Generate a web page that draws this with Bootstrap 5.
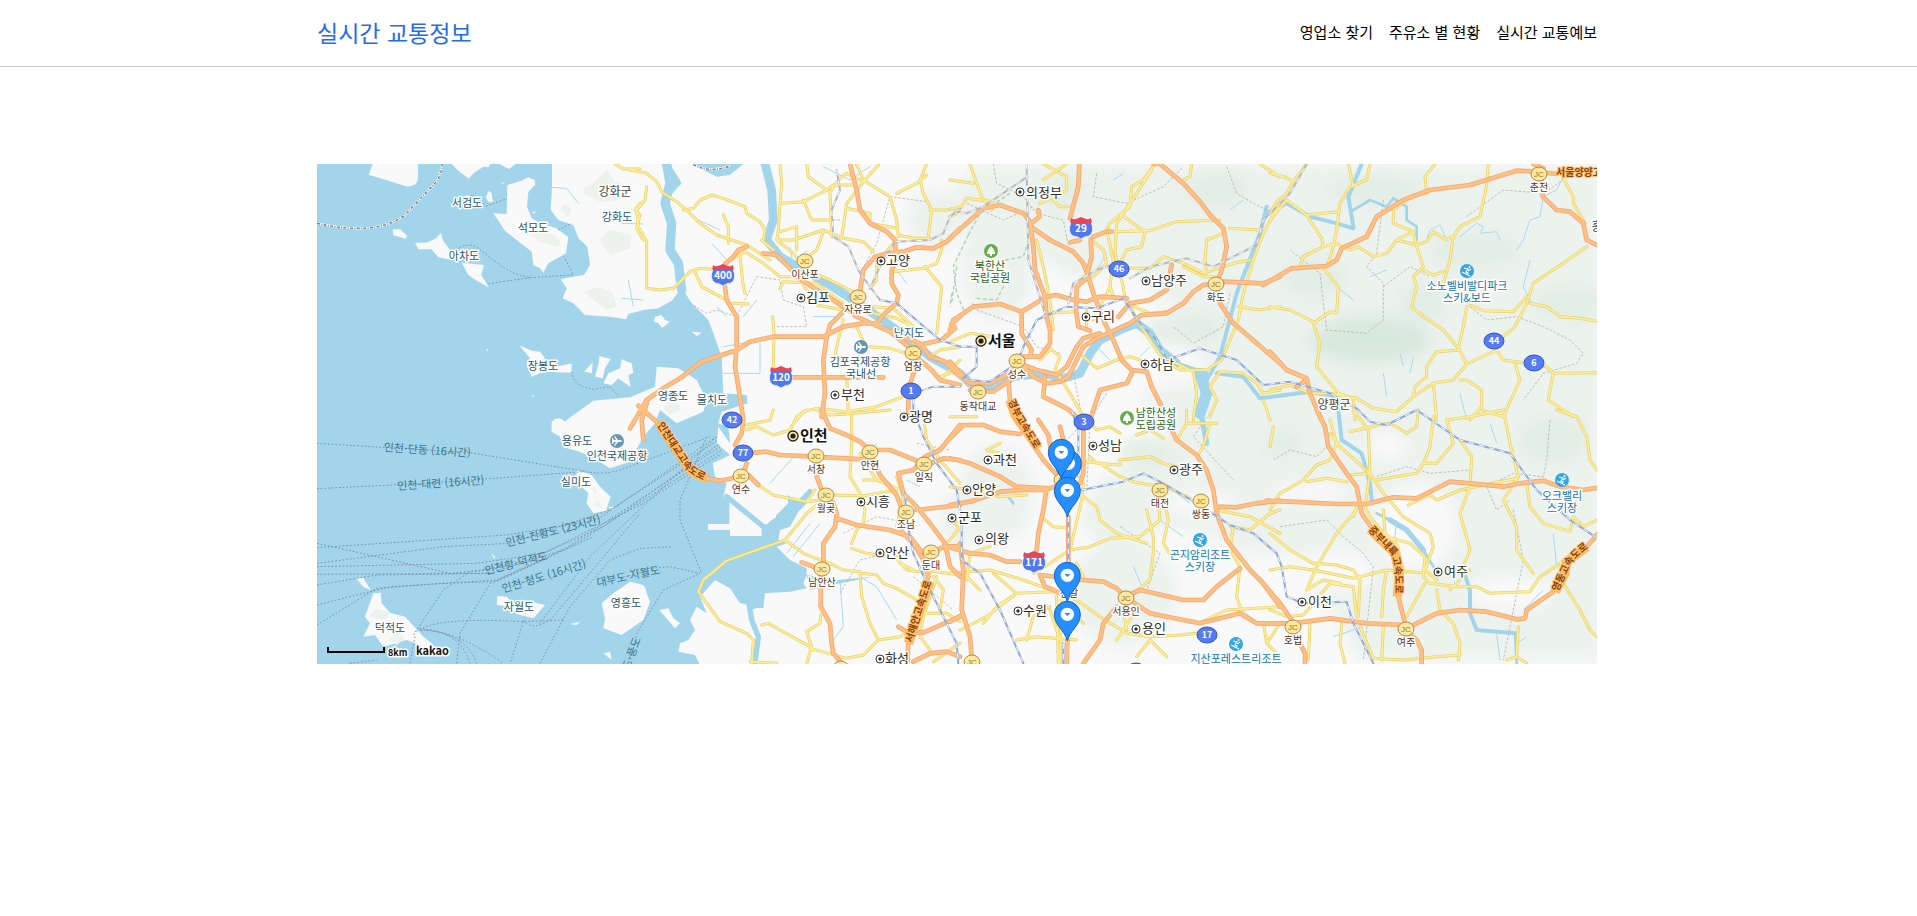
<!DOCTYPE html>
<html lang="ko">
<head>
<meta charset="utf-8">
<meta name="viewport" content="width=device-width, initial-scale=1">
<title>실시간 교통정보</title>
<link href="https://cdn.jsdelivr.net/npm/bootstrap@5.3.0/dist/css/bootstrap.min.css" rel="stylesheet">
<style>
body{font-family:"Noto Sans CJK KR","Noto Sans",sans-serif;color:#000;background:#fff}
.page-wrap{max-width:1283px;padding-right:3px}
.site-header{border-bottom:1px solid #c8c8c8}
.site-header .page-wrap{min-height:66px;padding-bottom:3px}
.brand-link{font-size:23px;line-height:34px;color:#1f6bf0}
.menu-link{font-size:15px;line-height:24px;color:#000}
.map-section{padding-top:97px}
.traffic-map{display:block;width:100%;height:auto;overflow:hidden}
.land{fill:#f9f9f9}
.green{fill:#ecf2ee}
.water{fill:none;stroke:#a2d5eb;stroke-linejoin:round;stroke-linecap:round}
.stream{fill:none;stroke:#a9daee;stroke-width:3}
.roads{fill:none;stroke-linejoin:round;stroke-linecap:round}
.minor-edge{stroke:#e6cf70;stroke-width:9}
.minor-fill{stroke:#feee93;stroke-width:5}
.major-edge{stroke:#f2a67a;stroke-width:14}
.major-fill{stroke:#ffc180;stroke-width:9}
.named-road{stroke:#ffb95e;stroke-width:28;stroke-linecap:butt}
.ferry{fill:none;stroke:#7d8fae;stroke-width:3;stroke-dasharray:5 6}
.border-line{fill:none;stroke:#b5b5a8;stroke-width:2.5;stroke-dasharray:8 5}
.rail-grey{stroke:#b9b9bd;stroke-width:6}
.rail-blue{stroke:#90a9d6;stroke-width:6}
.rail-dash{stroke:#fff;stroke-width:3;stroke-dasharray:16 16;stroke-linecap:butt}
.map-text text{paint-order:stroke;stroke:#fff;stroke-width:3px;stroke-linejoin:round}
.isle{font-size:11px;fill:#1f566f;text-anchor:middle}
.county{font-size:12px;fill:#444;text-anchor:middle}
.city{font-size:13px;fill:#2b2b2b}
.metro{font-size:15px;fill:#111;font-weight:700}
.junction{font-size:10px;fill:#5b3218;text-anchor:middle}
.park{font-size:11px;fill:#2c6212;text-anchor:middle}
.resort{font-size:11px;fill:#0f74b8;text-anchor:middle}
.map-text .route text{font-size:11px;fill:#41758c;stroke:none;text-anchor:middle}
.map-text .roadname text{font-size:10px;fill:#8d4300;stroke:#ffc173;stroke-width:2px;font-weight:700}
.map-text .shield text{font-size:10px;fill:#fff;stroke:none;font-weight:700;text-anchor:middle}
.map-text .shield .num{font-size:9px}
.jc-plate text,.map-text .jc-plate text{font-family:"Liberation Sans",sans-serif;font-size:8px;fill:#94762c;stroke:none;text-anchor:middle}
.scale-text{font-size:9px;font-weight:700;fill:#111}
.logo-text{font-size:11px;font-weight:700;fill:#111}
</style>
</head>
<body>
<header class="site-header">
  <div class="page-wrap container-fluid ps-0 d-flex flex-wrap align-items-center justify-content-between">
    <a class="brand-link text-decoration-none" href="#">실시간 교통정보</a>
    <nav class="d-flex flex-wrap gap-3" aria-label="주 메뉴">
      <a class="menu-link text-decoration-none" href="#">영업소 찾기</a>
      <a class="menu-link text-decoration-none" href="#">주유소 별 현황</a>
      <a class="menu-link text-decoration-none" href="#">실시간 교통예보</a>
    </nav>
  </div>
</header>
<main class="map-section">
<div class="page-wrap container-fluid ps-0">
<svg class="traffic-map" viewBox="317 164 1280 500" role="img" aria-label="수도권 지도">
<defs>
<filter id="soft" x="-20%" y="-20%" width="140%" height="140%"><feGaussianBlur stdDeviation="22"/></filter>
<g id="minor">
  <g transform="translate(0 0)"><path d="M915,12L940,27 990,27M990,130L975,150 990,165 980,205 1000,240"/></g>
  <g transform="translate(960 0)"><path d="M0,30L50,40 80,65 95,95 140,125 175,155 210,190 260,225 350,255 420,300M50,80L45,120 20,150 25,200 50,245 50,385 90,390 130,385 180,335 210,325 270,330M160,150L190,145 210,120 245,105 280,115 345,140 350,160 390,185 405,210 400,240M195,335L215,380 280,415M280,165L295,200 295,250M330,290L340,380 345,400M310,430L355,432M300,300L345,275 400,310 450,350 520,350M450,385L460,365 560,370M428,470L432,520 430,620M450,12L455,70 450,130 445,210 440,240 490,280 530,330 600,360 680,400M395,240L430,270M455,130L520,125 590,90 610,75 670,75M530,12L535,50 590,90M520,120L545,180 600,180M450,215L500,200 500,270M440,240L490,240 580,210 640,235 700,245 730,275M580,215L560,270 520,300M745,15L700,65 690,80 650,130 640,200 635,235M680,15L700,60 780,110 800,180 805,230M650,145L720,160 720,190 800,205M890,12L870,60 880,100 905,150 900,190 895,230M900,150L950,150 990,140M700,65L650,40 630,55 600,95 605,230M805,225L850,235 900,235M890,45L860,70 800,100M790,250L740,310 740,360 720,385M790,335L880,325 920,310 935,270 935,240M885,320L935,380 930,430 920,520M730,440L790,445 850,500M730,460L800,475 850,500 850,550M640,480L620,560 610,620M680,500L700,545M640,450L560,435 520,375M720,560L780,565 830,580M500,780L520,755 560,745 650,755 740,740 820,710M650,650L655,760M900,590L930,570 990,560M930,650L990,630M990,600L930,660M560,370L600,400 640,430"/></g>
  <g transform="translate(960 750)"><path d="M350,60L380,50 430,75 480,60 500,20 530,0M350,45L420,30 430,0M560,0L600,15 650,12 780,0M665,15L665,100 660,200 690,250 705,300 700,340 680,360 665,400M665,415L710,430 800,445M800,445L830,480 900,490M690,130L720,180 740,210 800,235M385,225L430,255 530,275M555,240L530,275 570,270M615,255L700,258 800,240M560,285L530,310 465,390 290,452 220,510 205,545 270,635 350,670 370,690 365,760M465,390L520,430 600,460 640,480 690,485M690,490L695,560 720,640 745,690 700,735 650,745 540,715M700,490L740,495 760,520 800,535 860,570M745,690L810,680 860,650M395,645L415,640 450,660 540,710M572,615L570,640 530,665 545,710 530,760M910,500L940,540 930,600M880,480L990,495M860,610L950,610 990,635M920,500L880,620 870,680 900,720M880,20L890,90 930,150 990,220M975,330L985,360 950,400 915,425M360,755L440,760M800,200L820,260 800,350M700,210L760,210 800,240M800,430L810,460 850,480M910,755L990,700"/></g>
  <g transform="translate(1920 0)"><path d="M60,12L80,70 95,110 125,150M0,60L70,70M0,170L20,160 50,115 130,125M280,12L350,50 350,90 270,130M305,115L330,140 355,140M350,12L280,60M615,12L580,60 545,80 540,140 480,190 470,210 490,300 480,380 490,410M605,30L560,100 500,190 495,280 515,360 525,410M515,165L585,215 575,260 530,270 510,310M490,215L600,212 680,185 810,180M840,205L930,210M725,12L720,50 690,65M930,12L990,50M420,235L460,270 470,310 430,350 400,350M540,325L600,325 640,290 700,310 760,340 850,310 900,300M820,220L770,240 765,300 770,345M700,320L760,350 800,350M990,130L940,220 910,300 880,400 865,480 815,600 770,630 690,630 640,600 560,480 530,420M865,440L930,450 990,440M280,470L300,460 370,455M260,240L280,320 300,420 310,510M0,545L60,520 130,530M300,565L330,590 315,630 360,700 400,770M270,600L300,570M400,590L440,625 500,600 540,590 570,600M640,590L730,635 740,700 730,780M990,690L940,700 920,670 880,640 810,635 780,680 800,720 780,770M530,430L600,460 650,455M410,450L410,500M430,480L480,380M940,720L960,780"/></g>
  <g transform="translate(1920 750)"><path d="M0,230L60,240 150,260 230,255M420,140L440,160 510,165 510,150 600,140 640,160 720,180M410,155L450,160 510,200 550,215 600,225 640,225 720,265M440,60L480,50 510,70M440,60L410,30M560,75L600,60 640,85M680,90L710,40 800,40M710,0L710,40M400,260L440,290 450,330 500,370 590,400M620,240L630,330 570,380 480,385 420,410 360,420 300,460 250,490M640,260L655,330 640,400 670,450M590,300L610,380 610,430 600,510 540,560M280,325L310,350 355,355M400,220L395,270 360,420M0,490L120,480 220,510 330,550 380,570 450,620 530,670 600,680M130,490L200,550 140,590 100,640M30,660L110,620 200,550M200,550L310,545M320,560L325,760M335,570L330,760M345,590L400,640M300,600L330,690M200,690L260,680 380,690M600,680L690,675 740,670M600,690L560,740M600,690L650,740M530,660L520,600M560,600L500,690M850,350L840,420 870,470 860,560 880,620M840,350L900,360 960,310 990,300M800,300L900,320 990,370M745,640L830,600 990,590M780,40L760,110 740,140M90,540L40,490M150,100L110,120 150,130M0,20L80,20M120,410L60,430 50,510M300,590L250,620 230,690M400,500L380,460M940,640L950,700 990,740M990,640L950,700"/></g>
  <g transform="translate(2880 0)"><path d="M0,40L40,50 70,65 110,12M70,65L50,100 20,125 0,160M0,180L50,120 110,165 160,160 205,155M235,12L250,80M300,12L290,60 240,80 210,130 200,210 190,260 175,310M110,165L155,235 160,260 100,290 90,320M160,260L200,250 240,270 265,260 310,290 350,280 380,240 430,215M495,12L465,50 470,100 430,105 370,150 370,190 430,215 440,260 460,320 430,350 440,380 425,440 460,470 520,510 565,565 590,612M380,240L440,255 470,245 490,215 530,240 550,230 570,200 630,170 650,75 655,12M550,230L540,300 520,370M460,330L490,345 520,335M880,55L910,110 910,130 945,190M950,260L880,310 790,370 770,430 735,500 700,530M780,430L830,440 870,470 930,475 990,485M600,435L640,452 730,455 770,410M590,440L580,500 565,565M570,570L500,575 470,620 470,650 435,680 430,710M590,612L680,570 700,600 740,605 830,620 850,640 990,638M590,612L550,660 490,670 430,710 380,755 310,745 260,715 180,700 120,700M160,325L205,380 200,460 180,455 130,490 150,550 140,620 205,700M0,440L60,450 130,485M570,660L590,660 635,690 635,740 600,780M635,750L700,770 750,660 735,610M490,670L500,780M850,640L835,720 910,770M0,690L60,675 120,700M205,700L250,715 255,780"/></g>
  <g transform="translate(2880 750)"><path d="M0,110L10,50M180,30L200,100 180,150 140,165 100,210 30,250 0,300M110,215L170,205 230,215M240,195L300,190M250,0L295,60 300,190 340,250 400,320 480,370 490,410 465,480 500,510M240,65L350,40 380,50 410,70 440,50 445,0M180,70L210,110 300,190 285,290 300,320 350,380 420,400 465,440 460,500M490,20L480,110 460,160 440,190 320,210M460,160L500,160 550,100 530,30 600,20 700,0M700,0L720,100 745,200 700,270 740,350 740,420 790,490M570,90L605,140 600,230 570,310 600,420 580,470M770,220L780,290 820,340 900,365 910,320 940,350 980,330M860,0L920,20 950,80 960,150 980,180M415,285L480,255 500,270 570,240 740,205M0,370L60,420 130,460 200,465 250,480 270,510 265,620M0,480L60,470 130,480 250,505 350,480 460,488M260,300L200,370 140,470 110,540M460,500L480,520 560,530 620,530 660,550 780,545 810,500 900,440M500,540L510,600 550,640 570,700 565,750M465,520L410,620M0,600L50,620 100,615 180,520 250,530 260,620M120,640L115,750M215,640L210,700 225,760M270,650L310,745 400,750 500,740 570,735M340,650L335,750M350,480L340,540 335,620M600,480L540,540M880,520L930,600 960,660 980,680M745,650L740,740 770,760M740,740L710,750M340,300L345,370 380,400 400,480M260,290L250,320M110,540L160,510 210,520"/></g>
</g>
<g id="major">
  <g transform="translate(960 0)"><path d="M660,12L680,90 690,150 720,190 770,215 795,240 797,275M825,275L797,300 785,330 785,370 805,405 800,430 765,460 740,490M285,312L310,290 325,270 350,260M400,280L440,285 480,325 500,350 570,395 640,440 680,470 735,495 780,515 835,560 870,600 905,630 930,660 990,675M990,205L950,245 910,265 860,262 820,275 775,280 735,290 700,330 692,380 690,440M0,805L50,720 100,685 150,655 215,605 320,570 360,545 430,530 580,530 640,500 700,490 740,490M285,380L290,420 320,470 320,560 315,620 325,680 340,780 335,820 315,855M485,652L760,652M640,455L600,495 590,530 580,600 585,700 575,770M865,555L935,540 975,505 965,490 990,470M735,495L870,550 900,590 945,605 990,650M870,610L850,640 835,690 835,770M25,737L80,785"/></g>
  <g transform="translate(960 750)"><path d="M40,90L35,30 50,-20M90,45L160,150 190,190 225,205 270,212 330,200M375,128L410,125 450,135 550,140 700,148 720,130M575,0L600,55 650,75 690,95 720,120 780,120 830,140 880,160M720,130L750,195 800,255 820,310M990,45L930,120 885,140 850,180 805,190 820,250 860,290 900,340 945,400 960,470 990,500M990,150L940,145 890,165M340,190L350,160M355,195L385,225M562,150L560,200 575,240 610,280 620,310 615,350 580,400 580,470M515,457L550,470 575,480M573,500L572,590 600,640 605,700 610,730 635,760M620,325L680,345 780,360 840,380 870,420 900,440M860,300L990,285M815,365L850,400 880,450 895,500 835,700 832,760M905,430L940,410 990,408M805,650L830,665 880,668 990,620M850,755L900,730 950,725 990,740"/></g>
  <g transform="translate(1920 0)"><path d="M388,12L385,80 360,175M0,235L50,190 100,145 150,135 220,160 240,185 250,260 255,330 285,410 290,470 300,510 300,550 270,590 220,590M265,150L268,170 245,190M250,205L300,240 370,275 400,310 415,350 380,380 378,450 385,500 420,512M362,247L390,240M430,230L470,215 485,215M422,240L425,290 412,340 430,400 460,480 490,540 515,600 545,630 590,635 605,680 635,740M610,12L630,12 700,70 750,125 780,165 820,205 830,260 815,330 800,370 760,375 730,395 700,430 650,460 575,465 540,490 440,535 400,560 380,600 355,650 330,665 290,670 250,650 210,610M0,510L10,480 40,460 70,440 150,432 215,455 290,410 320,405 370,420 410,425 450,410 530,415M505,470L540,430 600,420 650,390 665,315M215,455L215,520 245,570 240,590M800,375L810,430 850,490 920,550 990,610M820,365L940,370 990,350M0,605L40,650 60,670 120,670 180,640 210,610 260,630 320,645 350,620 380,560 400,535 450,520M60,690L130,695 180,660M175,660L180,720 200,760M285,650L280,710 350,745 390,780M545,640L530,670 450,690 420,780"/></g>
  <g transform="translate(1920 750)"><path d="M0,85L40,45 100,45 150,65 210,72M0,145L60,160 150,200 200,230 300,235 340,220M0,285L60,275 150,245 220,240 290,240M265,30L295,75 305,130M330,50L340,90M190,0L240,90 280,150 330,205M400,60L400,190 390,220M290,235L280,300 265,370 260,420M0,412L60,430 120,435 170,455 210,455M270,495L400,510 460,515 500,535 525,560 600,610 700,630 750,640 870,610 920,640 990,640M270,495L285,530 310,540 350,560M525,560L570,540 700,570 760,570 800,530 870,475M665,60L680,90 740,135 770,180 790,240 800,310 830,390 900,480 940,520 990,590M800,290L860,292 920,280 990,272M500,590L460,640 450,690 400,760M355,320L355,470M352,690L350,760M30,400L40,480 35,600 60,680 65,740M0,635L35,615"/></g>
  <g transform="translate(2880 0)"><path d="M-20,375L65,325 170,318 200,300 215,265 290,230 320,170 400,120 480,90 600,75 740,32 800,35 860,42M790,12L820,25M815,60L818,110 860,150 900,155 940,190 950,240 990,260M0,575L50,630 110,655 120,700 155,780M80,680L110,660"/></g>
  <g transform="translate(2880 750)"><path d="M140,0L165,50 175,110 230,190 260,230 275,310 310,360 375,430 390,490 385,560 405,640M-10,272L60,275 200,282 290,282 370,262 440,265 490,240 540,215 600,220 700,230 750,220 820,212 870,230 940,240 990,232M410,655L500,610 570,600 650,605 740,628 765,625 770,600 850,545 885,490 890,455 950,410 985,370M-30,510L30,580 65,630M0,640L70,640 180,625 290,640 400,645M410,665L440,690 455,720 455,760M80,680L105,730 105,760"/></g>
</g>
<g id="railgrey">
  <path d="M1580,30L1590,90 1565,150 1570,230 1615,260 1650,340 1710,420M1680,385L1710,320 1755,245 1860,240 1900,220 1920,170 1950,145M2150,12L2155,300 2205,460M1920,150L1970,160 2020,140 2145,55M2275,430L2290,370 2360,330 2420,310M2460,355L2520,320 2630,295 2710,320 2770,290 2840,255 2860,180 2910,130 2940,100 2990,12"/>
</g>
<g id="railblue">
  <path d="M1710,420L1760,430 1830,490 1890,540 1950,560 2000,560 2000,620 1960,655M1980,660L2040,665 2120,610 2145,550 2180,480 2270,440 2360,445 2440,415 2490,490 2540,540 2570,600 2670,565 2780,600 2860,675 2940,665 3060,700 3140,745 3180,785 3230,795 3320,750 3450,840 3600,880 3680,990 3780,1080 3870,1140M1810,750L1840,830 1880,910 1940,990 1955,1080 1955,1200 2010,1240 2070,1350 2140,1510M1785,1000L1790,1080 1810,1180 1860,1290 1940,1450 1945,1510M1950,680L1870,680 1810,700 1810,760M2285,750L2305,810 2305,950M2315,990L2440,965 2500,940 2560,970 2660,1030 2760,1095 2830,1120 2900,1180 2915,1220 2930,1310 2980,1330 3110,1325 3130,1390 3190,1510M2275,1070L2275,1210M2260,1450L2260,1510"/>
</g>
<g id="jc" class="jc-plate"><ellipse rx="8" ry="7" fill="#ffe79c" stroke="#ad8b4d"/><text y="3">JC</text></g>
<g id="dot"><circle r="4" fill="#fff" stroke="#333"/><circle r="1.7" fill="#333"/></g>
<g id="bigdot"><circle r="5" fill="#ffeaa0" stroke="#222" stroke-width="1.3"/><circle r="2.6" fill="#222"/></g>
<ellipse id="oval" rx="10" ry="8" fill="#567bf5" stroke="#3157b5"/>
<g id="express"><path d="M-10,-10Q-8,-8 -5,-9L0,-11L5,-9Q8,-8 10,-10L11,-5H-11Z" fill="#e64658"/><path d="M-10,-6H10Q14,4 8,8Q4,8 0,11Q-4,8 -8,8Q-14,4 -10,-6Z" fill="#5078f0" stroke="#fff" stroke-width=".7"/><path d="M-10,-8H10V-5H-10Z" fill="#e64658"/></g>
<g id="tree"><circle r="7" fill="#67ad49"/><path d="M0,-5Q4,-1 4,3H1V5H-1V3H-4Q-4,-1 0,-5Z" fill="#fff"/></g>
<g id="plane"><circle r="7" fill="#6497b0"/><path d="M5,0Q5,1 3,1H1L-2,5H-3L-1,1H-3L-4,3H-5V-3H-4L-3,-1H-1L-3,-5H-2L1,-1H3Q5,-1 5,0Z" fill="#fff"/></g>
<g id="ski"><circle r="7" fill="#35a5e6"/><circle cx="2.5" cy="-4" r="1" fill="#fff"/><path d="M-3,-3L1,-2 -1,1 1,2 0,4M4,-2L1,0M-5,1L3,5" fill="none" stroke="#fff" stroke-width="1.2"/></g>
<g id="pin"><path d="M0,80C-7,48 -39,34 -39,0A39,39 0 1 1 39,0C39,34 7,48 0,80Z" fill="#258fff" stroke="#1261c4" stroke-width="3"/><circle r="20" fill="#fff"/><path d="M-7,-4H7Q9,-4 7,-2L0,5L-7,-2Q-9,-4 -7,-4Z" fill="#258fff"/></g>
<path id="p-incheon" d="M657,425L682,463Q688,475 708,482"/>
<path id="p-gyeongbu" d="M1008,401L1014,415 1036,451"/>
<path id="p-west" d="M912,643L933,577"/>
<path id="p-inland" d="M1368,530L1391,554Q1397,570 1395,602"/>
<path id="p-east" d="M1558,592L1569,568Q1571,560 1592,545"/>
</defs>

<rect x="317" y="164" width="1280" height="500" fill="#a2d5eb"/>
<g transform="translate(310 160) scale(.333333)">
  <!-- islands and coast -->
  <g class="land">
    <path d="M188,12L176,44 288,79Q322,82 324,55V12ZM425,12L445,32 477,56 490,40 520,20 535,22 540,12ZM568,12L597,27 617,12Z"/>
    <path d="M592,75L635,62 655,52 674,60 675,75 655,95 651,140 665,175 690,190 740,205 775,232 768,280 715,310 700,338 690,325 670,315 665,275 620,240 585,212 550,160 590,162Z"/>
    <path d="M536,92L545,100 549,125 535,125 527,112ZM470,105L500,118 520,135 490,142 462,125ZM573,70L585,65 578,72ZM665,155L678,155 672,161ZM248,208L270,208 290,226 288,236 250,226ZM315,248L350,248 378,235 393,218 398,240 420,270 425,300 385,292 365,268 325,268ZM455,308L522,315 514,345 536,382 500,362 475,345Z"/>
    <path d="M726,12V80L722,150 745,180 790,195 805,235 832,260 840,315 822,345 790,350 752,358 770,385 758,415 790,430 825,465 900,470 948,478 955,462 1000,450 1045,445 1085,422 1110,390 1105,330 1070,280 1080,200 1060,120 1085,70 1060,30 1060,12Z"/>
    <path d="M628,556L665,572 690,575 705,595 693,605 692,618 740,620 785,610 785,638 700,635 665,650 650,610 660,595ZM822,635L848,607 846,640ZM868,588L902,597 885,625 878,655 855,650 865,615ZM880,670L895,640 930,625 935,598 965,610 970,638 955,645 962,682 925,655 905,675ZM530,565L536,572 530,574ZM551,585L558,593ZM615,705L624,703ZM662,708L678,704 668,710Z"/>
    <path d="M770,780L850,722 960,712 1035,680 1040,620 1105,625 1160,660 1190,720 1180,755 1100,790 1050,750 1035,790 1000,830 960,905 900,925 840,888 800,872 760,862 750,830 725,815 725,785Q745,765 765,785Z"/>
    <path d="M800,930L845,945 870,980 902,1010 888,1052 850,1060 830,1030 835,1000 800,965ZM892,1040L911,1040 910,1050ZM541,1147L531,1170ZM545,1178L557,1195 550,1195ZM138,1255L160,1254 182,1290 160,1280ZM190,1300L212,1298 215,1330 240,1358 285,1370 325,1413 340,1430 365,1450 363,1475 315,1450 290,1440 220,1460 195,1425 160,1430 180,1390 165,1370ZM562,1308L590,1310 610,1330 665,1325 705,1335 670,1375 620,1362 600,1340 560,1335ZM780,1392L810,1385 800,1395Z"/>
    <path d="M875,1330L910,1300 960,1265 1000,1275 1020,1325 1000,1380 935,1425 880,1405 885,1375ZM725,1462L740,1470ZM880,1480L900,1475 905,1500Z"/>
    <path d="M1080,12L1115,70 1060,130 1075,190 1070,275 1100,320 1120,390 1145,430 1195,480 1210,520 1235,590 1240,700 1310,705 1312,730 1235,755 1225,790 1255,800 1260,850 1225,800 1220,850 1260,885 1208,910 1215,950 1250,970 1240,1010 1360,1095 1400,1105 1440,1080 1410,1110 1405,1140 1430,1150 1400,1160 1440,1200 1490,1225 1490,1245 1480,1270 1490,1285 1440,1295 1360,1300 1355,1340 1320,1350 1275,1400 1320,1430 1325,1515H3870V0H1080Z"/>
    <path d="M1258,1025H1355V1128H1260V1110H1194V1092H1258ZM1215,1260L1260,1285 1290,1330 1320,1335 1332,1380 1345,1460 1340,1515H1170L1155,1485 1105,1475 1110,1450 1135,1440 1155,1410 1140,1380 1160,1340 1190,1360 1170,1310ZM1048,1350L1075,1345 1090,1375 1110,1390 1095,1405ZM960,1280L1005,1280 1015,1320 990,1365 960,1360Z"/>
    <path d="M1035,470L1055,465 1065,480 1080,485 1065,498 1055,503 1045,490 1032,485ZM1145,515L1175,518 1160,528Z"/>
  </g>
  <g fill="#a2d5eb"><path d="M1155,12H1300L1260,45 1220,50 1190,35ZM1370,980L1490,1030 1440,1080 1400,1120 1300,1060 1265,1030 1360,1095 1450,1040 1510,985 1490,1010 1440,1100 1410,1110ZM1300,1290L1370,1250 1360,1345 1320,1340ZM1490,1245L1580,1260 1690,1250 1590,1270 1500,1290Z"/></g>
  <path class="land" d="M1240,960L1330,960 1430,1000 1435,1030 1375,1090 1365,1095Z"/>
  <path class="water" stroke-width="28" d="M1070,12L1080,70 1065,130 1085,190 1080,270 1105,310 1115,390"/>
  <path class="water" stroke-width="16" d="M1250,1010L1360,1100M1400,1100L1500,995M1310,1290L1325,1380 1345,1430 1335,1510"/>
  <!-- hills -->
  <g class="green" filter="url(#soft)">
    <path d="M2000,12H3870V1500H3150L3050,1330 2950,1180 2820,1190 2680,1120 2560,1100 2400,1180 2300,1080 2380,950 2600,860 2480,700 2700,660 2600,450 2450,340 2300,360 2150,280 2000,350 1960,180 1880,140Z"/>
    <ellipse cx="2060" cy="330" rx="110" ry="150"/><ellipse cx="1870" cy="180" rx="80" ry="90"/><ellipse cx="2060" cy="1000" rx="110" ry="150"/><ellipse cx="2440" cy="1300" rx="160" ry="160"/><ellipse cx="1940" cy="1090" rx="50" ry="90"/>
  </g>
  <g fill="#dfece3" filter="url(#soft)" opacity=".8">
    <ellipse cx="3180" cy="540" rx="180" ry="70" fill="#d3e6d9"/><ellipse cx="2250" cy="100" rx="80" ry="45"/><ellipse cx="2720" cy="90" rx="100" ry="50"/><ellipse cx="3200" cy="90" rx="150" ry="40"/><ellipse cx="3500" cy="270" rx="140" ry="50"/><ellipse cx="2620" cy="510" rx="120" ry="50"/><ellipse cx="3010" cy="350" rx="90" ry="60"/><ellipse cx="3780" cy="430" rx="110" ry="50"/><ellipse cx="2510" cy="880" rx="90" ry="50"/><ellipse cx="3340" cy="430" rx="70" ry="60"/><ellipse cx="3730" cy="840" rx="100" ry="70"/><ellipse cx="2920" cy="850" rx="60" ry="40"/>
  </g>
  <g fill="#f9f9f9" filter="url(#soft)">
    <ellipse cx="3320" cy="1100" rx="120" ry="130"/><ellipse cx="3080" cy="1230" rx="120" ry="60"/><ellipse cx="3230" cy="860" rx="60" ry="45"/><ellipse cx="3600" cy="1300" rx="130" ry="50"/><ellipse cx="3000" cy="1000" rx="120" ry="30"/><ellipse cx="2670" cy="1030" rx="110" ry="35"/><ellipse cx="2440" cy="420" rx="80" ry="80"/>
  </g>
  <g fill="#edf2ec"><path d="M820,85L860,60 890,28 915,65 935,65 920,120 870,125 820,100ZM750,150L765,130 785,150 775,170ZM865,240L900,210 965,225 960,265 900,285ZM820,395L870,380 910,400 920,440 890,450 850,420ZM660,220L720,220 750,240 745,262 690,245ZM175,1370L200,1345 240,1360 225,1380ZM235,1440L260,1420 285,1435 260,1455ZM1060,745L1090,715 1115,745 1080,765ZM840,985L855,980 860,1000ZM850,1035L865,1020 875,1045Z"/></g>
  <!-- rivers and streams -->
  <path class="water" stroke-width="26" d="M1365,12L1385,90 1390,180 1370,240 1410,290 1480,330 1560,375 1660,440 1760,510 1860,590 1950,640 1980,670 2050,685 2110,650 2200,640 2260,655 2310,640 2340,580 2370,540 2440,505 2480,490 2520,520 2550,570 2600,610"/>
  <path class="water" stroke-width="12" d="M2600,610L2690,640M2870,140L2850,220 2780,400 2730,590 2690,660M2870,160L2930,130 3000,170 3080,190 3130,205M3155,12L3115,110 3130,200M3085,750L3095,840 3155,880 3180,970 3185,1020M3460,1230L3480,1290 3480,1360 3500,1410 3615,1420M2720,640L2800,650 2850,715 3000,695 3080,710 3085,750"/>
  <path class="water" stroke-width="34" d="M2670,640L2690,700 2670,760"/>
  <path class="water" stroke-width="16" d="M2680,700L2675,770 2690,850M3240,1080L3290,1110 3340,1170"/>
  <path class="water" stroke-width="8" d="M3130,150L3180,120 3230,140 3250,115 3290,140 3290,180 3320,200V240M3200,1060L3240,1080M3340,1170L3370,1220M3615,1420L3620,1510M2095,1010L2110,1030"/>
  <path class="stream" d="M3350,240L3360,210 3390,195 3410,240M3450,230L3500,190 3520,200 3510,220 3560,215 3570,240M3760,50L3740,90 3700,110 3690,170 3660,180 3640,240 3620,270M3660,300L3640,380 3670,440M720,82L770,85 805,130M935,190L1000,192M955,360L970,440M935,415L1000,420M1165,180L1230,210M1205,250L1250,300M1250,470L1220,440M1340,420L1300,470M1240,560L1350,540 1350,640 1240,640M1490,270L1450,320 1440,260M1580,470L1510,470M1540,20L1620,60 1680,20M1380,970L1460,880M1450,1190L1530,1090M1430,1180L1500,1090M1590,1260L1600,1400 1570,1440M1650,1250L1700,1280 1760,1380M1740,300L1790,370M1790,960L1830,980M1700,850L1660,910M2360,330L2390,280M2440,40L2410,60M2800,120L2760,150M2490,590L2520,560M2360,560L2400,600M2600,1000L2640,1030M2620,1130L2550,1080M2470,1220L2500,1290M2700,1180L2680,1240M2800,1350L2840,1390M3220,640L3230,710M3270,580L3280,620M3310,590L3300,640M3260,1080L3250,1180M3450,700L3470,780M3540,790L3560,850M3730,1120L3740,1220M3640,1350L3700,1290M3620,1450L3650,1430M3230,330L3180,350M3080,380L3130,420M3160,1400L3070,1430M3560,1420L3570,1500"/>
  <g class="ferry">
    <path d="M483,105L530,138 585,118M440,270Q470,245 500,262L570,315Q610,345 660,353L790,345 762,290M536,371L660,353M745,210L785,190M785,635Q790,680 850,688L900,680 925,707"/>
    <path d="M21,850L480,878 830,935Q880,945 930,930L1200,830M21,986L350,970 820,935M21,1163L590,1125 860,1080 1220,830M21,1210L400,1160 600,1150 900,1050 1225,840M21,1220L500,1210 700,1180 880,1100 1230,850M21,1243L540,1240 760,1170 1230,860M21,1275L200,1245 540,1240M21,1150L200,1190 420,1240 540,1230M21,1335L240,1280 560,1260 800,1150 1235,870M21,1395L200,1285 400,1270 560,1265 850,1130M310,1425L400,1290 480,1235 640,1210 1000,1030 1235,880M320,1415Q370,1370 640,1385L760,1380M640,1385Q620,1450 600,1510M640,1380Q670,1420 730,1370L990,1060M440,1510L450,1420 540,1270 700,1200M500,1510Q470,1420 330,1405M300,1510L315,1430M690,1510L780,1340 900,1200 990,1165 1090,1160M1190,830L1110,1020 1110,1080 1175,1240M960,1230L1080,1220 1170,1240 1060,1290 980,1420 960,1510M480,1510Q450,1410 330,1410M330,1410Q440,1410 580,1510M120,1510L200,1500M1220,830L840,1190 690,1390"/>
  </g>
  <path d="M21,190Q200,230 285,165L370,75Q395,50 396,12M1150,14Q1200,40 1260,18" fill="none" stroke="#fff" stroke-width="6"/>
  <path d="M21,190Q200,230 285,165L370,75Q395,50 396,12M1150,14Q1200,40 1260,18" fill="none" stroke="#777" stroke-width="4" stroke-dasharray="9 4 3 4"/>
  <g class="border-line"><path d="M1140,430L1190,460 1220,450 1280,470 1340,350 1410,360 1420,420 1480,440 1490,500 1400,500M1590,180L1500,180M1650,340L1700,250 1740,110 1850,125M1970,130L2080,180 2170,140M2050,12L2060,70 2140,110 2180,160 2260,180 2280,280M2360,40L2350,110 2450,130 2560,80 2620,20M2750,20L2780,100 2830,130 2870,150M2760,400L2740,500 2650,550 2590,500M2000,450L2140,500 2180,560 2250,580M2290,640L2320,790 2260,850M2390,700L2340,780 2330,1000M2700,760L2650,830 2770,960M2430,1100L2550,1180 2510,1290M3220,120L3200,280 3170,320 3220,370 3220,480 3170,520 3050,510 3040,430 3030,340 2940,270M3220,380L3300,320 3360,350M3470,170L3580,90 3700,100 3760,60M3480,440L3530,480 3620,470 3700,500 3780,540 3820,580 3800,610 3700,640 3640,720M3720,780L3710,900 3700,950 3610,940 3530,980 3560,1050 3600,1020M3200,950L3290,920 3360,940 3480,930M2890,900L2940,870 3020,890 3050,860M2910,1100L3050,1080 3100,1130 3160,1180 3190,1220 3160,1500M3610,1050L3640,1200 3580,1500M1600,1120L1700,1070 1800,1090M1590,1300L1650,1200 1730,1180M1820,850L1920,870M1810,1250L1930,1350"/></g>
  <g fill="none" stroke="#a8d4b1" stroke-width="4" stroke-dasharray="12 7"><path d="M1975,225L1930,320 1940,400 1965,460 1990,430M2000,415L2060,420 2085,370M1975,225L2010,160 2100,100M2085,300L2140,290 2150,260M1925,400L1920,440M1940,320L1925,430"/></g>
  <!-- roads and railways -->
  <g class="roads">
    <use href="#minor" class="minor-edge"/><use href="#minor" class="minor-fill"/>
    <use href="#major" class="major-edge"/><use href="#major" class="major-fill"/>
    <path class="named-road" d="M1045,788L1120,900 1145,935 1190,957M2100,720L2115,765 2185,865M1860,1265L1795,1450M3180,1108L3255,1180 3268,1245 3262,1310M3735,1295L3765,1240 3770,1205 3830,1160"/>
    <use href="#railgrey" class="rail-grey"/><use href="#railgrey" class="rail-dash"/>
    <use href="#railblue" class="rail-blue"/><use href="#railblue" class="rail-dash"/>
  </g>
</g>

<g class="map-text">
  <g class="isle">
    <text x="467" y="207">서검도</text><text x="533" y="232">석모도</text><text x="464" y="260">아차도</text><text x="617" y="221">강화도</text><text x="543" y="370">장봉도</text><text x="673" y="400">영종도</text><text x="712" y="404">물치도</text><text x="577" y="445">용유도</text><text x="576" y="486">실미도</text><text x="617" y="460">인천국제공항</text><text x="519" y="611">자월도</text><text x="626" y="607">영흥도</text><text x="390" y="632">덕적도</text><text x="909" y="337">난지도</text><text x="860" y="366">김포국제공항</text><text x="861" y="378">국내선</text>
  </g>
  <g class="county"><text x="615" y="196">강화군</text><text x="1334" y="409">양평군</text><text x="1597" y="231">홍</text></g>
  <g class="city">
    <text x="1026" y="197">의정부</text><text x="886" y="265">고양</text><text x="806" y="302">김포</text><text x="841" y="399">부천</text><text x="909" y="421">광명</text><text x="1151" y="285">남양주</text><text x="1091" y="321">구리</text><text x="1150" y="369">하남</text><text x="1098" y="450">성남</text><text x="993" y="464">과천</text><text x="972" y="494">안양</text><text x="866" y="506">시흥</text><text x="958" y="522">군포</text><text x="985" y="543">의왕</text><text x="885" y="557">안산</text><text x="1023" y="615">수원</text><text x="1142" y="633">용인</text><text x="1179" y="474">광주</text><text x="1444" y="576">여주</text><text x="1308" y="606">이천</text><text x="885" y="663">화성</text>
  </g>
  <use href="#dot" x="1020" y="192"/><use href="#dot" x="881" y="261"/><use href="#dot" x="801" y="298"/><use href="#dot" x="835" y="395"/><use href="#dot" x="904" y="417"/><use href="#dot" x="1146" y="281"/><use href="#dot" x="1086" y="317"/><use href="#dot" x="1145" y="364"/><use href="#dot" x="1093" y="446"/><use href="#dot" x="988" y="460"/><use href="#dot" x="967" y="490"/><use href="#dot" x="861" y="502"/><use href="#dot" x="952" y="518"/><use href="#dot" x="979" y="540"/><use href="#dot" x="880" y="553"/><use href="#dot" x="1018" y="611"/><use href="#dot" x="1136" y="629"/><use href="#dot" x="1174" y="470"/><use href="#dot" x="1438" y="572"/><use href="#dot" x="1302" y="602"/><use href="#dot" x="880" y="659"/>
  <g class="metro"><text x="988" y="346">서울</text><text x="800" y="441">인천</text></g>
  <use href="#bigdot" x="981" y="341"/><use href="#bigdot" x="793" y="436"/>

  <g class="junction">
    <text x="805" y="278">이산포</text><text x="858" y="313">자유로</text><text x="913" y="370">염창</text><text x="1017" y="378">성수</text><text x="978" y="410">동작대교</text><text x="1216" y="301">화도</text><text x="1539" y="191">춘천</text><text x="816" y="473">서창</text><text x="870" y="469">안현</text><text x="924" y="481">일직</text><text x="741" y="493">연수</text><text x="826" y="512">월곶</text><text x="906" y="528">조남</text><text x="931" y="569">둔대</text><text x="822" y="586">남안산</text><text x="1069" y="597">신갈</text><text x="1126" y="615">서용인</text><text x="1160" y="507">태전</text><text x="1201" y="518">쌍동</text><text x="1293" y="644">호법</text><text x="1406" y="646">여주</text>
  </g>
  <use href="#jc" x="805" y="261"/><use href="#jc" x="858" y="297"/><use href="#jc" x="913" y="353"/><use href="#jc" x="1017" y="361"/><use href="#jc" x="978" y="392"/><use href="#jc" x="1216" y="284"/><use href="#jc" x="1539" y="174"/><use href="#jc" x="816" y="456"/><use href="#jc" x="870" y="452"/><use href="#jc" x="924" y="464"/><use href="#jc" x="741" y="476"/><use href="#jc" x="826" y="495"/><use href="#jc" x="906" y="512"/><use href="#jc" x="931" y="552"/><use href="#jc" x="822" y="569"/><use href="#jc" x="1126" y="598"/><use href="#jc" x="1160" y="490"/><use href="#jc" x="1201" y="501"/><use href="#jc" x="1293" y="627"/><use href="#jc" x="1406" y="629"/><use href="#jc" x="1062" y="480"/><use href="#jc" x="972" y="662"/><use href="#jc" x="841" y="668"/>

  <use href="#tree" x="991" y="251"/><use href="#tree" x="1127" y="418"/>
  <g class="park"><text x="990" y="270">북한산</text><text x="990" y="282">국립공원</text><text x="1156" y="417">남한산성</text><text x="1156" y="429">도립공원</text></g>
  <use href="#plane" x="861" y="347"/><use href="#plane" x="617" y="441"/>
  <use href="#ski" x="1467" y="271"/><use href="#ski" x="1200" y="540"/><use href="#ski" x="1562" y="480"/><use href="#ski" x="1236" y="644"/>
  <g class="resort"><text x="1467" y="290">소노벨비발디파크</text><text x="1467" y="302">스키&amp;보드</text><text x="1200" y="559">곤지암리조트</text><text x="1200" y="571">스키장</text><text x="1562" y="500">오크밸리</text><text x="1562" y="512">스키장</text><text x="1236" y="663">지산포레스트리조트</text></g>

  <g class="shield">
    <use href="#express" x="723" y="275"/><text x="723" y="279">400</text><use href="#express" x="781" y="377"/><text x="781" y="381">120</text><use href="#express" x="1081" y="228"/><text x="1081" y="232">29</text><use href="#express" x="1034" y="562"/><text x="1034" y="566">171</text>
    <use href="#oval" x="732" y="420"/><text class="num" x="732" y="423">42</text><use href="#oval" x="743" y="453"/><text class="num" x="743" y="456">77</text><use href="#oval" x="911" y="391"/><text class="num" x="911" y="394">1</text><use href="#oval" x="1119" y="269"/><text class="num" x="1119" y="272">46</text><use href="#oval" x="1084" y="422"/><text class="num" x="1084" y="425">3</text><use href="#oval" x="1207" y="635"/><text class="num" x="1207" y="638">17</text><use href="#oval" x="1494" y="341"/><text class="num" x="1494" y="344">44</text><use href="#oval" x="1534" y="363"/><text class="num" x="1534" y="366">6</text><use href="#oval" x="1136" y="671"/>
  </g>
  <g class="route">
    <text transform="translate(427 454) rotate(4)">인천-단동 (16시간)</text><text transform="translate(441 487) rotate(-4)">인천-대련 (16시간)</text><text transform="translate(554 535) rotate(-14)">인천-친황도 (23시간)</text><text transform="translate(517 567) rotate(-14)">인천항-덕적도</text><text transform="translate(545 580) rotate(-17)">인천-청도 (16시간)</text><text transform="translate(629 580) rotate(-12)">대부도-자월도</text><text transform="translate(635 655) rotate(-70)">도-풍도</text>
  </g>
  <g class="roadname">
    <text><textPath href="#p-incheon">인천대교고속도로</textPath></text><text><textPath href="#p-gyeongbu">경부고속도로</textPath></text><text><textPath href="#p-west">서해안고속도로</textPath></text><text><textPath href="#p-inland">중부내륙고속도로</textPath></text><text><textPath href="#p-east">영동고속도로</textPath></text><text x="1556" y="176">서울양양고</text>
  </g>
  <path d="M328,647V652H384V647" fill="none" stroke="#000" stroke-width="2"/>
  <text class="scale-text" x="388" y="656">8km</text>
  <text class="logo-text" x="416" y="655">kakao</text>
</g>
<g transform="translate(950 410) scale(.333333)">
  <use href="#pin" x="355" y="160"/><use href="#pin" x="334" y="127"/><use href="#pin" x="352" y="241"/><use href="#pin" x="352" y="496"/><use href="#pin" x="352" y="613"/>
</g>
</svg>
</div>
</main>
<script src="https://cdn.jsdelivr.net/npm/bootstrap@5.3.0/dist/js/bootstrap.bundle.min.js"></script>
</body>
</html>
